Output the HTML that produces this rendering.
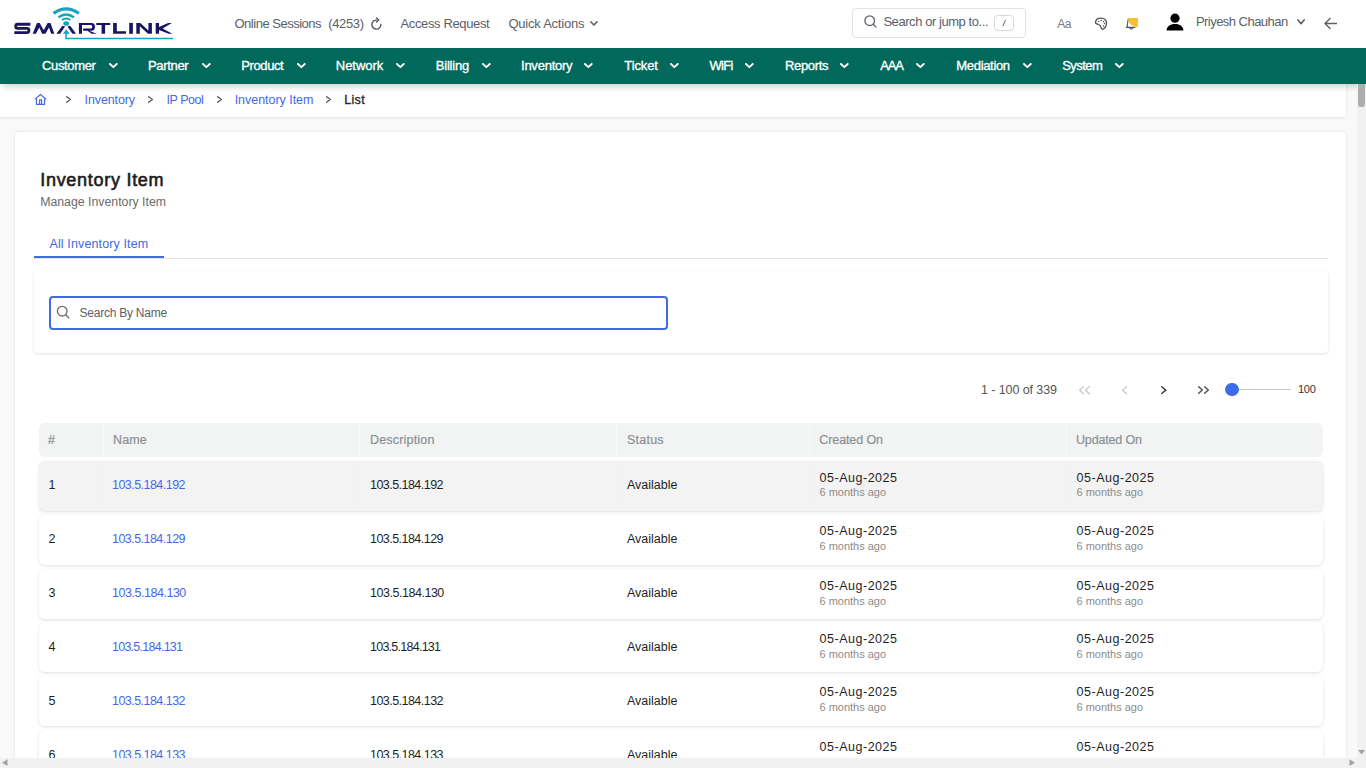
<!DOCTYPE html>
<html><head><meta charset="utf-8">
<style>
*{box-sizing:border-box;margin:0;padding:0}
html,body{width:1366px;height:768px;overflow:hidden;background:#f9f9f9;font-family:"Liberation Sans",sans-serif}
.a{position:absolute;white-space:nowrap}
svg.a{overflow:visible}
</style></head><body>
<div class="a" style="left:0;top:0;width:1366px;height:48px;background:#fff"></div>
<svg class="a" style="left:0;top:0" width="190" height="48" viewBox="0 0 190 48">
<path d="M30.4 24.25H17.6Q15.7 24.25 15.7 26.2V26.5Q15.7 28.4 17.6 28.4H27Q28.95 28.4 28.95 30.4V30.6Q28.95 32.55 27 32.55H14.3" fill="none" stroke="#1b1463" stroke-width="2.8"/>
<g fill="#1b1463">
<path d="M32.7 33.8L37 22.9H39.7L43.75 30.2L47.6 22.9H50.5L54.3 33.8H51.2L49 27.6L45.4 33.8H42.1L39.3 27.6L35.9 33.8Z"/>
<path d="M56.4 33.8L62.4 25.8L65.1 26.5L60.1 33.8Z"/>
<path d="M76.1 33.8L70.1 25.8L67.4 26.5L72.4 33.8Z"/>
<path d="M78.9 33.8V22.9H91.6Q95 22.9 95 26.75Q95 30.8 91.6 30.8H89.3L96.8 33.8H91.6L87.4 30.8H83.1V28.6H91Q92.2 28.6 92.2 26.8Q92.2 25.1 91 25.1H82V33.8Z"/>
<path d="M96.3 22.9H110.2V25.1H105.1V33.8H101.6V25.1H96.3Z"/>
<path d="M113.1 22.9H116.8V31.2H126V33.8H113.1Z"/>
<path d="M129.2 22.9H132.9V33.8H129.2Z"/>
<path d="M136.3 33.8V22.9H140.3L148.4 30.4V22.9H151.9V33.8H148L139.8 26.3V33.8Z"/>
<path d="M155.7 22.9H159V26.9L168.2 22.9H171.9L162.6 28.4L172.3 33.8H168.6L159 29.9V33.8H155.7Z"/>
</g>
<g fill="#17a2bf"><ellipse cx="66.2" cy="23.5" rx="2.9" ry="2.3"/><path d="M62.9 33.8L66.2 29.3L69.9 33.8Z"/></g>
<g fill="none" stroke="#17a2bf">
<path d="M53.6 13.4Q66.2 4.4 78.8 13.4" stroke-width="3.2"/>
<path d="M58.4 17.4Q66.2 11.6 74 17.4" stroke-width="2.4"/>
<path d="M62 20Q66.2 17.2 70.4 20" stroke-width="2"/>
<path d="M66.05 33V38.55H173.2" stroke-width="1.5"/>
</g></svg>
<span class="a" style="left:234.50px;top:17.29px;font-size:13px;line-height:13px;color:#5b6068;letter-spacing:-0.488px;">Online Sessions</span>
<span class="a" style="left:328.20px;top:17.29px;font-size:13px;line-height:13px;color:#5b6068;letter-spacing:-0.355px;">(4253)</span>
<svg class="a" style="left:368px;top:15px" width="16" height="16" viewBox="0 0 16 16"><path d="M8.6 5.1A4.5 4.5 0 1 0 12.9 9.4" fill="none" stroke="#50565e" stroke-width="1.4" stroke-linecap="round"/><path d="M8.7 3.1L10.7 5.1L8.7 7.1" fill="none" stroke="#50565e" stroke-width="1.4" stroke-linecap="round" stroke-linejoin="round"/></svg>
<span class="a" style="left:400.50px;top:17.29px;font-size:13px;line-height:13px;color:#5b6068;letter-spacing:-0.364px;">Access Request</span>
<span class="a" style="left:508.40px;top:17.29px;font-size:13px;line-height:13px;color:#5b6068;letter-spacing:-0.229px;">Quick Actions</span>
<svg class="a" style="left:588.10px;top:19.30px" width="11.9" height="8.8" viewBox="0 0 11.9 8.8"><path d="M2.80 2.80L5.95 6.00L9.10 2.80" fill="none" stroke="#5b6068" stroke-width="1.6" stroke-linecap="round" stroke-linejoin="round"/></svg>
<div class="a" style="left:852px;top:8px;width:174px;height:30px;border:1px solid #dfe2e6;border-radius:4px"></div>
<svg class="a" style="left:864px;top:15px" width="13" height="13" viewBox="0 0 13 13"><circle cx="5.7" cy="5.7" r="4.8" fill="none" stroke="#5b6068" stroke-width="1.3"/><path d="M9.2 9.2L12.4 12.4" stroke="#5b6068" stroke-width="1.3"/></svg>
<span class="a" style="left:883.40px;top:15.39px;font-size:13px;line-height:13px;color:#5b6068;letter-spacing:-0.438px;">Search or jump to...</span>
<div class="a" style="left:994px;top:15px;width:19.5px;height:16px;border:1px solid #d5d8dc;border-radius:4px"></div>
<svg class="a" style="left:1001px;top:19px" width="6" height="8" viewBox="0 0 6 8"><path d="M4.5 1L1.8 7.2" stroke="#5b6068" stroke-width="1"/></svg>
<span class="a" style="left:1057.20px;top:18.44px;font-size:12px;line-height:12px;color:#7a7a7a;letter-spacing:-0.377px;">Aa</span>
<svg class="a" style="left:1090px;top:13px" width="22" height="21" viewBox="1090 13 22 21"><path d="M1097.6 18.7Q1100.5 17.6 1103.6 18.5Q1106.6 19.9 1106.6 23.4Q1106.4 27 1103.8 28.6Q1102 29.6 1101.3 28.3Q1100.7 25.3 1098.7 24.5Q1096.4 23.8 1095.6 23.2Q1095.2 20.4 1097.6 18.7Z" fill="none" stroke="#4a5058" stroke-width="1.25" stroke-linejoin="round"/><g fill="#4a5058"><circle cx="1098.7" cy="21.4" r=".75"/><circle cx="1101.2" cy="20.4" r=".75"/><circle cx="1103.5" cy="21.5" r=".75"/><circle cx="1104.5" cy="23.5" r=".75"/><circle cx="1103.3" cy="26.1" r=".75"/></g></svg>
<svg class="a" style="left:1120px;top:12px" width="24" height="22" viewBox="1120 12 24 22"><path d="M1128.3 19.2C1127.6 21 1127.5 24.5 1127.2 26.2Q1126.9 27 1126.1 27.3H1135M1129.6 27.9Q1131.3 30 1133 27.9" fill="none" stroke="#50565d" stroke-width="1.15" stroke-linecap="round"/><path d="M1127.9 17.9H1137.9V27A9.3 9.3 0 0 1 1127.9 17.9Z" fill="#fbbd2c"/></svg>
<svg class="a" style="left:1165px;top:12px" width="20" height="20" viewBox="0 0 20 20"><circle cx="10" cy="6.2" r="4.6" fill="#000"/><path d="M1.6 18.6C1.6 14.4 5 12 10 12C15 12 18.4 14.4 18.4 18.6Z" fill="#000"/></svg>
<span class="a" style="left:1195.90px;top:15.09px;font-size:13px;line-height:13px;color:#5b6068;letter-spacing:-0.530px;">Priyesh Chauhan</span>
<svg class="a" style="left:1295.00px;top:17.00px" width="12.0" height="9.5" viewBox="0 0 12.0 9.5"><path d="M2.70 2.70L6.00 6.80L9.30 2.70" fill="none" stroke="#4f555c" stroke-width="1.4" stroke-linecap="round" stroke-linejoin="round"/></svg>
<svg class="a" style="left:1323px;top:16px" width="16" height="14" viewBox="0 0 16 14"><path d="M14 7.5H2.5M7.5 2L2 7.5L7.5 13" fill="none" stroke="#5b6068" stroke-width="1.3"/></svg>
<div class="a" style="left:0;top:84px;width:1346px;height:33px;background:#fff;box-shadow:0 1px 3px rgba(0,0,0,.10)"></div>
<svg class="a" style="left:30px;top:90px" width="22" height="18" viewBox="30 90 22 18"><path d="M35.3 98.9L40.5 94.5L45.8 98.9M36.5 97.9V104.4H44.6V97.9M39.6 104.4V99.8H41.6V104.4" fill="none" stroke="#4567ec" stroke-width="1.15" stroke-linejoin="round" stroke-linecap="round"/></svg>
<svg class="a" style="left:64.40px;top:94.40px" width="9.0" height="11.0" viewBox="0 0 9.0 11.0"><path d="M2.65 2.65L6.35 5.50L2.65 8.35" fill="none" stroke="#555" stroke-width="1.3" stroke-linecap="round" stroke-linejoin="round"/></svg>
<svg class="a" style="left:146.00px;top:94.40px" width="9.0" height="11.0" viewBox="0 0 9.0 11.0"><path d="M2.65 2.65L6.35 5.50L2.65 8.35" fill="none" stroke="#555" stroke-width="1.3" stroke-linecap="round" stroke-linejoin="round"/></svg>
<svg class="a" style="left:214.80px;top:94.40px" width="9.0" height="11.0" viewBox="0 0 9.0 11.0"><path d="M2.65 2.65L6.35 5.50L2.65 8.35" fill="none" stroke="#555" stroke-width="1.3" stroke-linecap="round" stroke-linejoin="round"/></svg>
<svg class="a" style="left:324.00px;top:94.40px" width="9.0" height="11.0" viewBox="0 0 9.0 11.0"><path d="M2.65 2.65L6.35 5.50L2.65 8.35" fill="none" stroke="#555" stroke-width="1.3" stroke-linecap="round" stroke-linejoin="round"/></svg>
<span class="a" style="left:84.60px;top:94.12px;font-size:12.5px;line-height:12.5px;color:#4469ea;letter-spacing:-0.127px;">Inventory</span>
<span class="a" style="left:166.40px;top:94.12px;font-size:12.5px;line-height:12.5px;color:#4469ea;letter-spacing:-0.429px;">IP Pool</span>
<span class="a" style="left:234.70px;top:94.12px;font-size:12.5px;line-height:12.5px;color:#4469ea;letter-spacing:-0.038px;">Inventory Item</span>
<span class="a" style="left:344.20px;top:94.12px;font-size:12.5px;line-height:12.5px;color:#2b2b2b;letter-spacing:0.350px;-webkit-text-stroke:0.35px #2b2b2b;">List</span>
<div class="a" style="left:15px;top:132px;width:1331px;height:700px;background:#fff;border-radius:4px;box-shadow:0 0 3px rgba(0,0,0,.12)"></div>
<span class="a" style="left:40.20px;top:170.56px;font-size:18px;line-height:18px;color:#1c1c1c;letter-spacing:0.720px;-webkit-text-stroke:0.6px #1c1c1c;">Inventory Item</span>
<span class="a" style="left:40.20px;top:195.59px;font-size:12.3px;line-height:12.3px;color:#6b6b6b;letter-spacing:0.001px;">Manage Inventory Item</span>
<span class="a" style="left:49.50px;top:237.62px;font-size:12.5px;line-height:12.5px;color:#4469ea;letter-spacing:0.126px;">All Inventory Item</span>
<div class="a" style="left:34px;top:257.5px;width:1294px;height:1px;background:#e3e3e3"></div>
<div class="a" style="left:34px;top:256px;width:130px;height:2px;background:#3f6be6"></div>
<div class="a" style="left:34px;top:270.5px;width:1294px;height:82.5px;background:#fff;border-radius:4px;box-shadow:0 1px 3px rgba(0,0,0,.12)"></div>
<div class="a" style="left:49px;top:295.5px;width:619px;height:34px;border:2px solid #3f6be6;border-radius:4px;background:#fff"></div>
<svg class="a" style="left:56px;top:305px" width="15" height="15" viewBox="0 0 15 15"><circle cx="6.2" cy="6.2" r="4.8" fill="none" stroke="#6a6a6a" stroke-width="1.3"/><path d="M9.7 9.7L13.2 13.2" stroke="#6a6a6a" stroke-width="1.3"/></svg>
<span class="a" style="left:79.60px;top:306.74px;font-size:12px;line-height:12px;color:#606060;letter-spacing:-0.246px;">Search By Name</span>
<span class="a" style="left:981.00px;top:383.62px;font-size:12.5px;line-height:12.5px;color:#555;letter-spacing:-0.087px;">1 - 100 of 339</span>
<svg class="a" style="left:1077.40px;top:383.60px" width="9.0" height="12.4" viewBox="0 0 9.0 12.4"><path d="M6.40 2.60L2.60 6.20L6.40 9.80" fill="none" stroke="#c6c6c6" stroke-width="1.2" stroke-linecap="round" stroke-linejoin="round"/></svg>
<svg class="a" style="left:1083.40px;top:383.60px" width="9.0" height="12.4" viewBox="0 0 9.0 12.4"><path d="M6.40 2.60L2.60 6.20L6.40 9.80" fill="none" stroke="#c6c6c6" stroke-width="1.2" stroke-linecap="round" stroke-linejoin="round"/></svg>
<svg class="a" style="left:1120.30px;top:383.60px" width="9.3" height="12.4" viewBox="0 0 9.3 12.4"><path d="M6.70 2.60L2.60 6.20L6.70 9.80" fill="none" stroke="#c6c6c6" stroke-width="1.2" stroke-linecap="round" stroke-linejoin="round"/></svg>
<svg class="a" style="left:1158.60px;top:383.80px" width="9.6" height="12.2" viewBox="0 0 9.6 12.2"><path d="M2.70 2.70L6.90 6.10L2.70 9.50" fill="none" stroke="#3a3a3a" stroke-width="1.4" stroke-linecap="round" stroke-linejoin="round"/></svg>
<svg class="a" style="left:1196.00px;top:383.80px" width="9.0" height="12.0" viewBox="0 0 9.0 12.0"><path d="M2.67 2.67L6.33 6.00L2.67 9.32" fill="none" stroke="#4a4a4a" stroke-width="1.35" stroke-linecap="round" stroke-linejoin="round"/></svg>
<svg class="a" style="left:1201.50px;top:383.80px" width="9.0" height="12.0" viewBox="0 0 9.0 12.0"><path d="M2.67 2.67L6.33 6.00L2.67 9.32" fill="none" stroke="#4a4a4a" stroke-width="1.35" stroke-linecap="round" stroke-linejoin="round"/></svg>
<div class="a" style="left:1238px;top:388.6px;width:53px;height:1.5px;background:#c9c9c9"></div>
<div class="a" style="left:1224.8px;top:382.6px;width:13.9px;height:13.9px;border-radius:50%;background:#3e6be8"></div>
<span class="a" style="left:1298.00px;top:384.19px;font-size:11px;line-height:11px;color:#333;letter-spacing:-0.276px;">100</span>
<div class="a" style="left:39px;top:423px;width:1284px;height:34px;background:#f2f3f3;border-radius:6px"></div>
<div class="a" style="left:103px;top:423px;width:1px;height:34px;background:#f7f8f8"></div>
<div class="a" style="left:359px;top:423px;width:1px;height:34px;background:#f7f8f8"></div>
<div class="a" style="left:615.5px;top:423px;width:1px;height:34px;background:#f7f8f8"></div>
<div class="a" style="left:809px;top:423px;width:1px;height:34px;background:#f7f8f8"></div>
<div class="a" style="left:1066px;top:423px;width:1px;height:34px;background:#f7f8f8"></div>
<span class="a" style="left:48.00px;top:434.42px;font-size:12.5px;line-height:12.5px;color:#8b9096;letter-spacing:0.000px;-webkit-text-stroke:0.2px #8b9096;">#</span>
<span class="a" style="left:113.10px;top:434.42px;font-size:12.5px;line-height:12.5px;color:#8b9096;letter-spacing:0.086px;-webkit-text-stroke:0.2px #8b9096;">Name</span>
<span class="a" style="left:370.00px;top:434.42px;font-size:12.5px;line-height:12.5px;color:#8b9096;letter-spacing:0.188px;-webkit-text-stroke:0.2px #8b9096;">Description</span>
<span class="a" style="left:627.00px;top:434.42px;font-size:12.5px;line-height:12.5px;color:#8b9096;letter-spacing:0.233px;-webkit-text-stroke:0.2px #8b9096;">Status</span>
<span class="a" style="left:819.30px;top:434.42px;font-size:12.5px;line-height:12.5px;color:#8b9096;letter-spacing:-0.101px;-webkit-text-stroke:0.2px #8b9096;">Created On</span>
<span class="a" style="left:1076.00px;top:434.42px;font-size:12.5px;line-height:12.5px;color:#8b9096;letter-spacing:-0.156px;-webkit-text-stroke:0.2px #8b9096;">Updated On</span>
<div class="a" style="left:39px;top:461.0px;width:1284px;height:50px;background:#f3f3f3;border-radius:6px;box-shadow:0 1px 3px rgba(0,0,0,.13)"></div>
<div class="a" style="left:103px;top:461.0px;width:1px;height:50px;background:#f0f1f1"></div>
<div class="a" style="left:359px;top:461.0px;width:1px;height:50px;background:#f0f1f1"></div>
<div class="a" style="left:615.5px;top:461.0px;width:1px;height:50px;background:#f0f1f1"></div>
<div class="a" style="left:809px;top:461.0px;width:1px;height:50px;background:#f0f1f1"></div>
<div class="a" style="left:1066px;top:461.0px;width:1px;height:50px;background:#f0f1f1"></div>
<span class="a" style="left:48.50px;top:478.72px;font-size:12.5px;line-height:12.5px;color:#1f1f1f;letter-spacing:0.000px;">1</span>
<span class="a" style="left:112.00px;top:478.72px;font-size:12.5px;line-height:12.5px;color:#4469ea;letter-spacing:-0.536px;">103.5.184.192</span>
<span class="a" style="left:370.00px;top:478.72px;font-size:12.5px;line-height:12.5px;color:#1f1f1f;letter-spacing:-0.536px;">103.5.184.192</span>
<span class="a" style="left:627.00px;top:478.72px;font-size:12.5px;line-height:12.5px;color:#1f1f1f;letter-spacing:0.000px;">Available</span>
<span class="a" style="left:819.50px;top:471.82px;font-size:12.5px;line-height:12.5px;color:#1f1f1f;letter-spacing:0.523px;">05-Aug-2025</span>
<span class="a" style="left:819.50px;top:487.49px;font-size:11px;line-height:11px;color:#8c8c8c;letter-spacing:-0.014px;">6 months ago</span>
<span class="a" style="left:1076.50px;top:471.82px;font-size:12.5px;line-height:12.5px;color:#1f1f1f;letter-spacing:0.523px;">05-Aug-2025</span>
<span class="a" style="left:1076.50px;top:487.49px;font-size:11px;line-height:11px;color:#8c8c8c;letter-spacing:-0.014px;">6 months ago</span>
<div class="a" style="left:39px;top:514.8px;width:1284px;height:50px;background:#fff;border-radius:6px;box-shadow:0 1px 3px rgba(0,0,0,.13)"></div>
<span class="a" style="left:48.50px;top:532.72px;font-size:12.5px;line-height:12.5px;color:#1f1f1f;letter-spacing:0.000px;">2</span>
<span class="a" style="left:112.00px;top:532.72px;font-size:12.5px;line-height:12.5px;color:#4469ea;letter-spacing:-0.536px;">103.5.184.129</span>
<span class="a" style="left:370.00px;top:532.72px;font-size:12.5px;line-height:12.5px;color:#1f1f1f;letter-spacing:-0.536px;">103.5.184.129</span>
<span class="a" style="left:627.00px;top:532.72px;font-size:12.5px;line-height:12.5px;color:#1f1f1f;letter-spacing:0.000px;">Available</span>
<span class="a" style="left:819.50px;top:525.12px;font-size:12.5px;line-height:12.5px;color:#1f1f1f;letter-spacing:0.523px;">05-Aug-2025</span>
<span class="a" style="left:819.50px;top:541.19px;font-size:11px;line-height:11px;color:#8c8c8c;letter-spacing:-0.014px;">6 months ago</span>
<span class="a" style="left:1076.50px;top:525.12px;font-size:12.5px;line-height:12.5px;color:#1f1f1f;letter-spacing:0.523px;">05-Aug-2025</span>
<span class="a" style="left:1076.50px;top:541.19px;font-size:11px;line-height:11px;color:#8c8c8c;letter-spacing:-0.014px;">6 months ago</span>
<div class="a" style="left:39px;top:568.6px;width:1284px;height:50px;background:#fff;border-radius:6px;box-shadow:0 1px 3px rgba(0,0,0,.13)"></div>
<span class="a" style="left:48.50px;top:586.72px;font-size:12.5px;line-height:12.5px;color:#1f1f1f;letter-spacing:0.000px;">3</span>
<span class="a" style="left:112.00px;top:586.72px;font-size:12.5px;line-height:12.5px;color:#4469ea;letter-spacing:-0.469px;">103.5.184.130</span>
<span class="a" style="left:370.00px;top:586.72px;font-size:12.5px;line-height:12.5px;color:#1f1f1f;letter-spacing:-0.469px;">103.5.184.130</span>
<span class="a" style="left:627.00px;top:586.72px;font-size:12.5px;line-height:12.5px;color:#1f1f1f;letter-spacing:0.000px;">Available</span>
<span class="a" style="left:819.50px;top:580.12px;font-size:12.5px;line-height:12.5px;color:#1f1f1f;letter-spacing:0.523px;">05-Aug-2025</span>
<span class="a" style="left:819.50px;top:595.99px;font-size:11px;line-height:11px;color:#8c8c8c;letter-spacing:-0.014px;">6 months ago</span>
<span class="a" style="left:1076.50px;top:580.12px;font-size:12.5px;line-height:12.5px;color:#1f1f1f;letter-spacing:0.523px;">05-Aug-2025</span>
<span class="a" style="left:1076.50px;top:595.99px;font-size:11px;line-height:11px;color:#8c8c8c;letter-spacing:-0.014px;">6 months ago</span>
<div class="a" style="left:39px;top:622.4px;width:1284px;height:50px;background:#fff;border-radius:6px;box-shadow:0 1px 3px rgba(0,0,0,.13)"></div>
<span class="a" style="left:48.50px;top:640.72px;font-size:12.5px;line-height:12.5px;color:#1f1f1f;letter-spacing:0.000px;">4</span>
<span class="a" style="left:112.00px;top:640.72px;font-size:12.5px;line-height:12.5px;color:#4469ea;letter-spacing:-0.744px;">103.5.184.131</span>
<span class="a" style="left:370.00px;top:640.72px;font-size:12.5px;line-height:12.5px;color:#1f1f1f;letter-spacing:-0.744px;">103.5.184.131</span>
<span class="a" style="left:627.00px;top:640.72px;font-size:12.5px;line-height:12.5px;color:#1f1f1f;letter-spacing:0.000px;">Available</span>
<span class="a" style="left:819.50px;top:633.32px;font-size:12.5px;line-height:12.5px;color:#1f1f1f;letter-spacing:0.523px;">05-Aug-2025</span>
<span class="a" style="left:819.50px;top:649.19px;font-size:11px;line-height:11px;color:#8c8c8c;letter-spacing:-0.014px;">6 months ago</span>
<span class="a" style="left:1076.50px;top:633.32px;font-size:12.5px;line-height:12.5px;color:#1f1f1f;letter-spacing:0.523px;">05-Aug-2025</span>
<span class="a" style="left:1076.50px;top:649.19px;font-size:11px;line-height:11px;color:#8c8c8c;letter-spacing:-0.014px;">6 months ago</span>
<div class="a" style="left:39px;top:676.2px;width:1284px;height:50px;background:#fff;border-radius:6px;box-shadow:0 1px 3px rgba(0,0,0,.13)"></div>
<span class="a" style="left:48.50px;top:694.72px;font-size:12.5px;line-height:12.5px;color:#1f1f1f;letter-spacing:0.000px;">5</span>
<span class="a" style="left:112.00px;top:694.72px;font-size:12.5px;line-height:12.5px;color:#4469ea;letter-spacing:-0.536px;">103.5.184.132</span>
<span class="a" style="left:370.00px;top:694.72px;font-size:12.5px;line-height:12.5px;color:#1f1f1f;letter-spacing:-0.536px;">103.5.184.132</span>
<span class="a" style="left:627.00px;top:694.72px;font-size:12.5px;line-height:12.5px;color:#1f1f1f;letter-spacing:0.000px;">Available</span>
<span class="a" style="left:819.50px;top:686.02px;font-size:12.5px;line-height:12.5px;color:#1f1f1f;letter-spacing:0.523px;">05-Aug-2025</span>
<span class="a" style="left:819.50px;top:702.29px;font-size:11px;line-height:11px;color:#8c8c8c;letter-spacing:-0.014px;">6 months ago</span>
<span class="a" style="left:1076.50px;top:686.02px;font-size:12.5px;line-height:12.5px;color:#1f1f1f;letter-spacing:0.523px;">05-Aug-2025</span>
<span class="a" style="left:1076.50px;top:702.29px;font-size:11px;line-height:11px;color:#8c8c8c;letter-spacing:-0.014px;">6 months ago</span>
<div class="a" style="left:39px;top:730.0px;width:1284px;height:50px;background:#fff;border-radius:6px;box-shadow:0 1px 3px rgba(0,0,0,.13)"></div>
<span class="a" style="left:48.50px;top:748.72px;font-size:12.5px;line-height:12.5px;color:#1f1f1f;letter-spacing:0.000px;">6</span>
<span class="a" style="left:112.00px;top:748.72px;font-size:12.5px;line-height:12.5px;color:#4469ea;letter-spacing:-0.536px;">103.5.184.133</span>
<span class="a" style="left:370.00px;top:748.72px;font-size:12.5px;line-height:12.5px;color:#1f1f1f;letter-spacing:-0.536px;">103.5.184.133</span>
<span class="a" style="left:627.00px;top:748.72px;font-size:12.5px;line-height:12.5px;color:#1f1f1f;letter-spacing:0.000px;">Available</span>
<span class="a" style="left:819.50px;top:741.02px;font-size:12.5px;line-height:12.5px;color:#1f1f1f;letter-spacing:0.523px;">05-Aug-2025</span>
<span class="a" style="left:819.50px;top:757.49px;font-size:11px;line-height:11px;color:#8c8c8c;letter-spacing:-0.014px;">6 months ago</span>
<span class="a" style="left:1076.50px;top:741.02px;font-size:12.5px;line-height:12.5px;color:#1f1f1f;letter-spacing:0.523px;">05-Aug-2025</span>
<span class="a" style="left:1076.50px;top:757.49px;font-size:11px;line-height:11px;color:#8c8c8c;letter-spacing:-0.014px;">6 months ago</span>
<div class="a" style="left:0;top:48px;width:1366px;height:36px;background:#00695c;box-shadow:0 5px 6px -2px rgba(0,0,0,.16)"></div>
<span class="a" style="left:42.10px;top:58.99px;font-size:13px;line-height:13px;color:#fff;letter-spacing:-0.364px;-webkit-text-stroke:0.32px #fff;">Customer</span>
<svg class="a" style="left:106.60px;top:61.00px" width="12.7" height="9.1" viewBox="0 0 12.7 9.1"><path d="M2.95 2.95L6.35 6.15L9.75 2.95" fill="none" stroke="#fff" stroke-width="1.9" stroke-linecap="round" stroke-linejoin="round"/></svg>
<span class="a" style="left:148.00px;top:58.99px;font-size:13px;line-height:13px;color:#fff;letter-spacing:-0.338px;-webkit-text-stroke:0.32px #fff;">Partner</span>
<svg class="a" style="left:200.00px;top:61.00px" width="12.7" height="9.1" viewBox="0 0 12.7 9.1"><path d="M2.95 2.95L6.35 6.15L9.75 2.95" fill="none" stroke="#fff" stroke-width="1.9" stroke-linecap="round" stroke-linejoin="round"/></svg>
<span class="a" style="left:241.30px;top:58.99px;font-size:13px;line-height:13px;color:#fff;letter-spacing:-0.400px;-webkit-text-stroke:0.32px #fff;">Product</span>
<svg class="a" style="left:294.50px;top:61.00px" width="12.7" height="9.1" viewBox="0 0 12.7 9.1"><path d="M2.95 2.95L6.35 6.15L9.75 2.95" fill="none" stroke="#fff" stroke-width="1.9" stroke-linecap="round" stroke-linejoin="round"/></svg>
<span class="a" style="left:335.80px;top:58.99px;font-size:13px;line-height:13px;color:#fff;letter-spacing:-0.029px;-webkit-text-stroke:0.32px #fff;">Network</span>
<svg class="a" style="left:394.00px;top:61.00px" width="12.7" height="9.1" viewBox="0 0 12.7 9.1"><path d="M2.95 2.95L6.35 6.15L9.75 2.95" fill="none" stroke="#fff" stroke-width="1.9" stroke-linecap="round" stroke-linejoin="round"/></svg>
<span class="a" style="left:435.70px;top:58.99px;font-size:13px;line-height:13px;color:#fff;letter-spacing:-0.181px;-webkit-text-stroke:0.32px #fff;">Billing</span>
<svg class="a" style="left:480.10px;top:61.00px" width="12.7" height="9.1" viewBox="0 0 12.7 9.1"><path d="M2.95 2.95L6.35 6.15L9.75 2.95" fill="none" stroke="#fff" stroke-width="1.9" stroke-linecap="round" stroke-linejoin="round"/></svg>
<span class="a" style="left:521.00px;top:58.99px;font-size:13px;line-height:13px;color:#fff;letter-spacing:-0.234px;-webkit-text-stroke:0.32px #fff;">Inventory</span>
<svg class="a" style="left:582.30px;top:61.00px" width="12.7" height="9.1" viewBox="0 0 12.7 9.1"><path d="M2.95 2.95L6.35 6.15L9.75 2.95" fill="none" stroke="#fff" stroke-width="1.9" stroke-linecap="round" stroke-linejoin="round"/></svg>
<span class="a" style="left:624.30px;top:58.99px;font-size:13px;line-height:13px;color:#fff;letter-spacing:-0.118px;-webkit-text-stroke:0.32px #fff;">Ticket</span>
<svg class="a" style="left:668.00px;top:61.00px" width="12.7" height="9.1" viewBox="0 0 12.7 9.1"><path d="M2.95 2.95L6.35 6.15L9.75 2.95" fill="none" stroke="#fff" stroke-width="1.9" stroke-linecap="round" stroke-linejoin="round"/></svg>
<span class="a" style="left:709.50px;top:58.99px;font-size:13px;line-height:13px;color:#fff;letter-spacing:-0.696px;-webkit-text-stroke:0.32px #fff;">WiFi</span>
<svg class="a" style="left:743.30px;top:61.00px" width="12.7" height="9.1" viewBox="0 0 12.7 9.1"><path d="M2.95 2.95L6.35 6.15L9.75 2.95" fill="none" stroke="#fff" stroke-width="1.9" stroke-linecap="round" stroke-linejoin="round"/></svg>
<span class="a" style="left:785.00px;top:58.99px;font-size:13px;line-height:13px;color:#fff;letter-spacing:-0.336px;-webkit-text-stroke:0.32px #fff;">Reports</span>
<svg class="a" style="left:838.20px;top:61.00px" width="12.7" height="9.1" viewBox="0 0 12.7 9.1"><path d="M2.95 2.95L6.35 6.15L9.75 2.95" fill="none" stroke="#fff" stroke-width="1.9" stroke-linecap="round" stroke-linejoin="round"/></svg>
<span class="a" style="left:880.30px;top:58.99px;font-size:13px;line-height:13px;color:#fff;letter-spacing:-1.157px;-webkit-text-stroke:0.32px #fff;">AAA</span>
<svg class="a" style="left:914.20px;top:61.00px" width="12.7" height="9.1" viewBox="0 0 12.7 9.1"><path d="M2.95 2.95L6.35 6.15L9.75 2.95" fill="none" stroke="#fff" stroke-width="1.9" stroke-linecap="round" stroke-linejoin="round"/></svg>
<span class="a" style="left:956.30px;top:58.99px;font-size:13px;line-height:13px;color:#fff;letter-spacing:-0.320px;-webkit-text-stroke:0.32px #fff;">Mediation</span>
<svg class="a" style="left:1020.60px;top:61.00px" width="12.7" height="9.1" viewBox="0 0 12.7 9.1"><path d="M2.95 2.95L6.35 6.15L9.75 2.95" fill="none" stroke="#fff" stroke-width="1.9" stroke-linecap="round" stroke-linejoin="round"/></svg>
<span class="a" style="left:1062.20px;top:58.99px;font-size:13px;line-height:13px;color:#fff;letter-spacing:-0.548px;-webkit-text-stroke:0.32px #fff;">System</span>
<svg class="a" style="left:1113.20px;top:61.00px" width="12.7" height="9.1" viewBox="0 0 12.7 9.1"><path d="M2.95 2.95L6.35 6.15L9.75 2.95" fill="none" stroke="#fff" stroke-width="1.9" stroke-linecap="round" stroke-linejoin="round"/></svg>
<div class="a" style="left:1357px;top:84px;width:9px;height:674px;background:#f1f1f1"></div>
<div class="a" style="left:1358.4px;top:84px;width:6.6px;height:22.7px;background:#adadad;border-radius:0 0 3.1px 3.1px"></div>
<svg class="a" style="left:1357px;top:748px" width="9" height="9" viewBox="0 0 9 9"><path d="M1 2H8L4.5 6.5Z" fill="#a3a3a3"/></svg>
<div class="a" style="left:0;top:758px;width:1366px;height:10px;background:#f1f1f1"></div>
<svg class="a" style="left:0;top:758px" width="10" height="10" viewBox="0 0 10 10"><path d="M7.5 1.3V8L2 4.65Z" fill="#a3a3a3"/></svg>
<svg class="a" style="left:1347px;top:758px" width="10" height="10" viewBox="0 0 10 10"><path d="M2.5 1.3V8L8 4.65Z" fill="#a3a3a3"/></svg>
</body></html>
